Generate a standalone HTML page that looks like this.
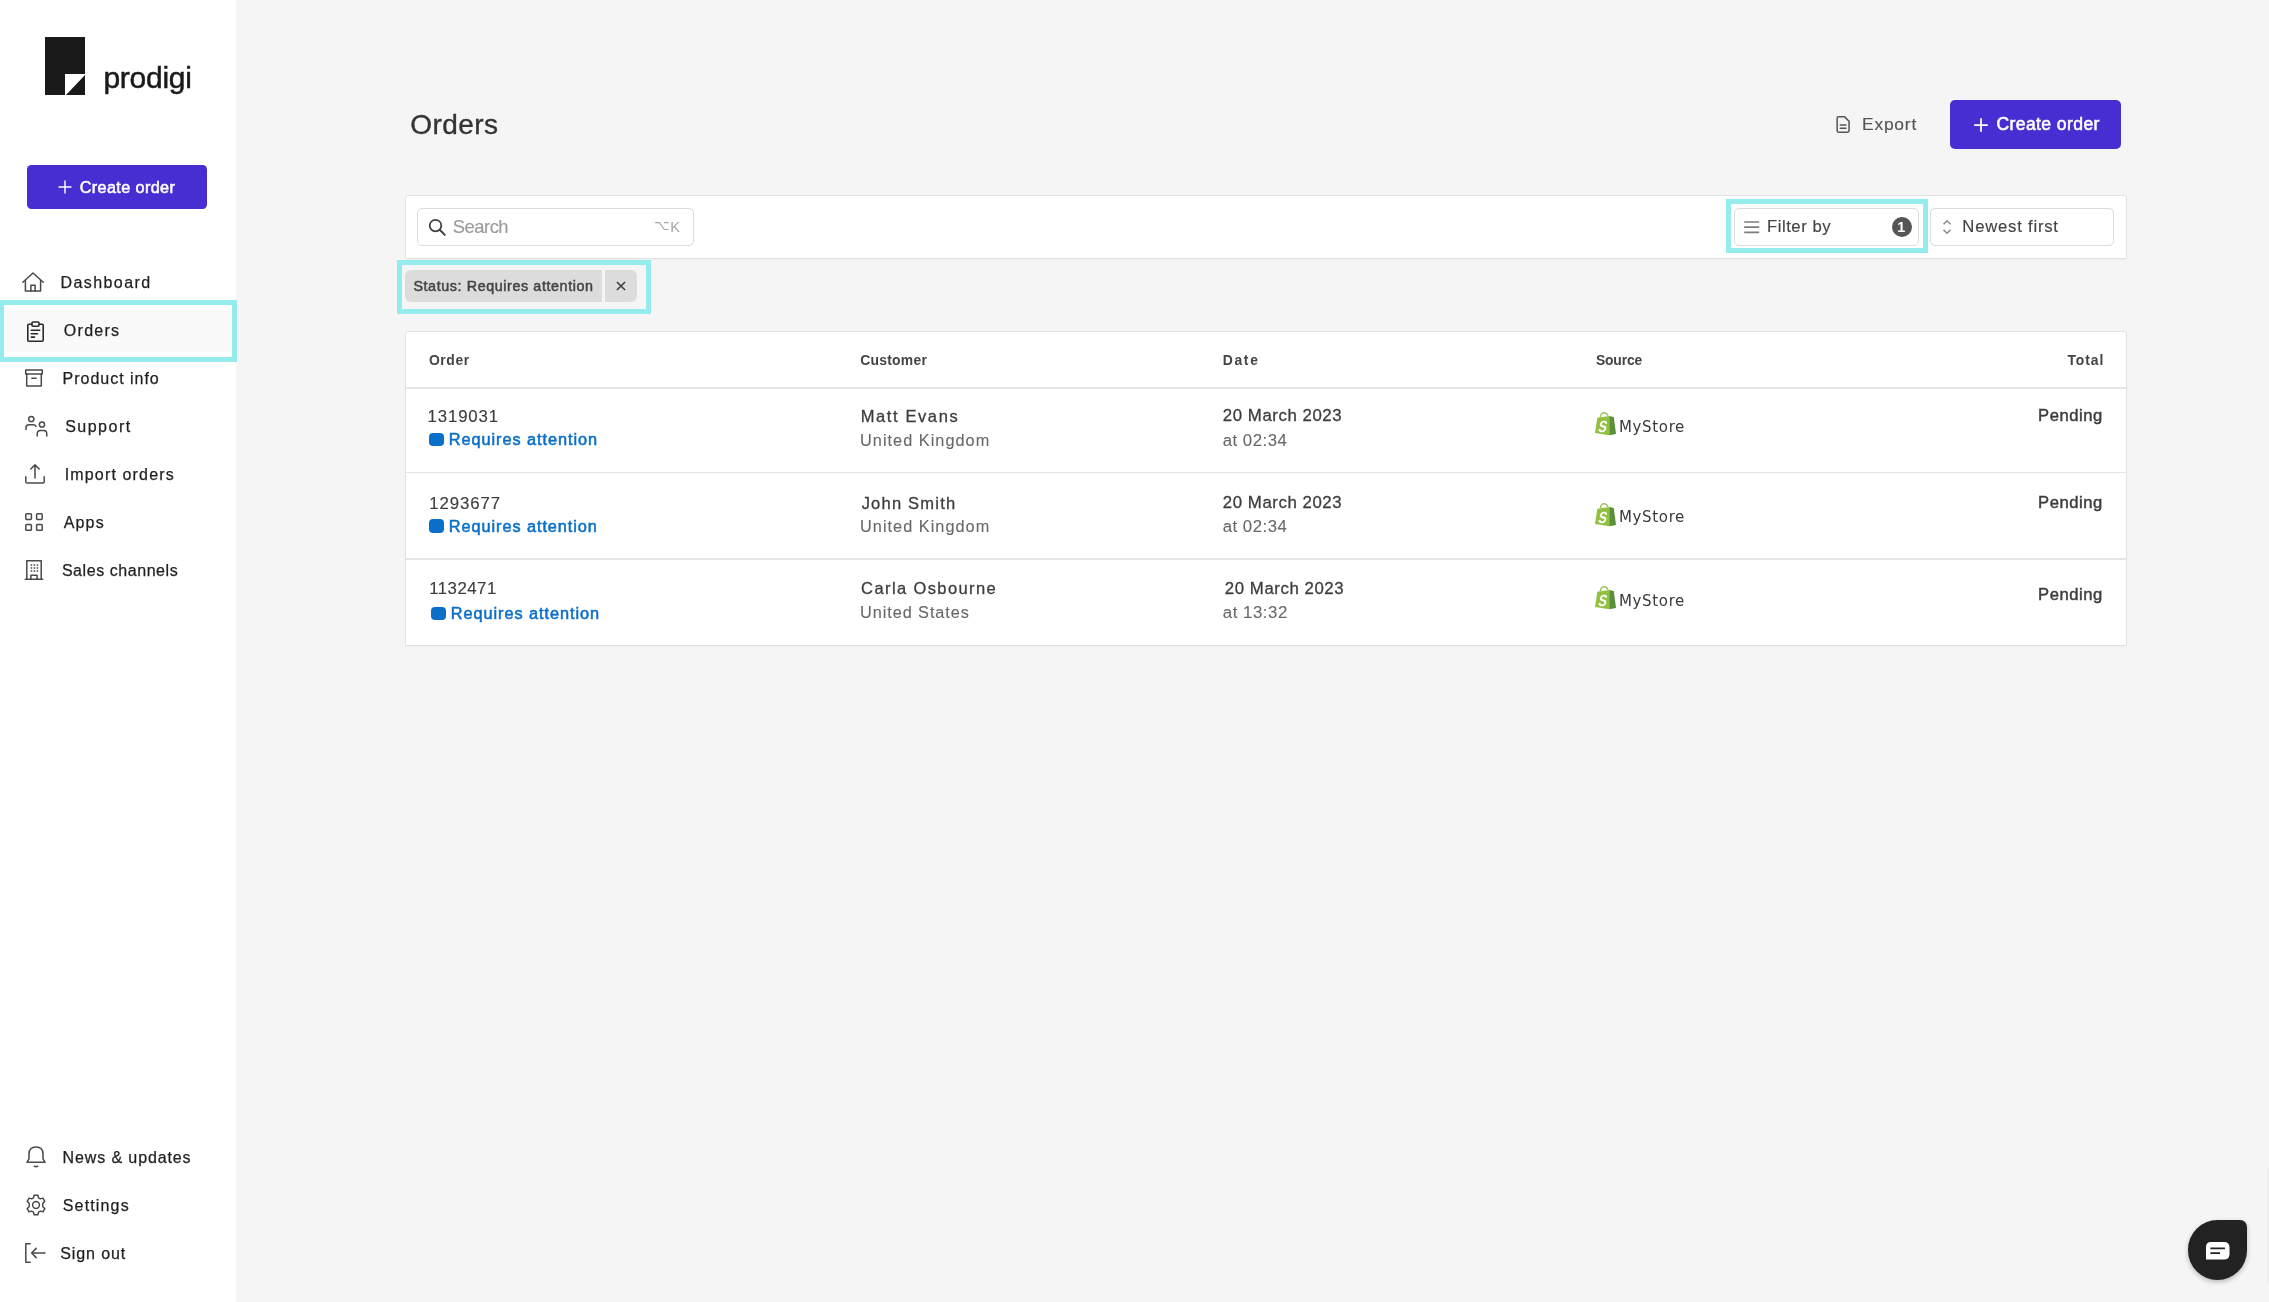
<!DOCTYPE html>
<html lang="en"><head><meta charset="utf-8"><title>Orders - Prodigi</title>
<style>
html,body{margin:0;padding:0;}
body{width:2269px;height:1302px;position:relative;background:#f5f5f5;font-family:'Liberation Sans',sans-serif;}
.t{position:absolute;white-space:pre;line-height:1;font-family:'Liberation Sans',sans-serif;}
.abs{position:absolute;box-sizing:border-box;}
#sidebar{left:0;top:0;width:236px;height:1302px;background:#fff;}
.btn{background:#462ed3;border-radius:3px;}
.panel{background:#fff;border:1px solid #e2e2e2;border-radius:2px;box-shadow:0 1px 1.5px rgba(0,0,0,0.03);}
.field{background:#fff;border:1px solid #dcdcdc;border-radius:5px;}
.hl{border:5px solid #95ecec;}
.sep{background:#e5e5e5;height:1px;}
svg{position:absolute;overflow:visible;}
.ic{fill:none;stroke:#4a4a4a;stroke-width:1.5;stroke-linecap:round;stroke-linejoin:round;}
#app{position:absolute;left:0;top:0;width:2269px;height:1302px;overflow:hidden;will-change:transform;}

</style></head>
<body>
<div id="app">
<div id="sidebar" class="abs"></div>
<!-- logo -->
<svg style="left:45px;top:37px" width="40" height="58" viewBox="0 0 40 58"><path d="M0 0H40V37H20V58H0Z" fill="#1a1a1a"/><path d="M40 38V58H21Z" fill="#1a1a1a"/></svg>
<!-- sidebar create button -->
<div class="abs btn" style="left:27px;top:165px;width:180px;height:44px;border-radius:4.5px;"></div>
<svg style="left:58px;top:180px" width="14" height="14" viewBox="0 0 14 14"><path d="M7 0.5V13.5M0.5 7H13.5" stroke="#fff" stroke-width="1.45" fill="none"/></svg>
<!-- active nav item -->
<div class="abs" style="left:0;top:309.5px;width:236px;height:42px;background:#f9f9f9;"></div>
<div class="abs hl" style="left:-1.3px;top:300px;width:238.3px;height:62px;"></div>

<!-- NAV ICONS -->
<!-- home -->
<svg class="ic" style="left:22px;top:272px" width="22" height="20" viewBox="0 0 22 20"><path d="M0.8 10.2L11 1L21.2 10.2"/><path d="M3.4 8.5V19H18.6V8.5"/><path d="M8.9 19V13.3H13.1V19"/></svg>
<!-- orders clipboard -->
<svg class="ic" style="left:27.1px;top:320.7px;stroke:#2a2a2a;stroke-width:1.6" width="17" height="21" viewBox="0 0 17 21"><path d="M4.5 3.2H1.8Q0.8 3.2 0.8 4.2V19.2Q0.8 20.2 1.8 20.2H15.2Q16.2 20.2 16.2 19.2V4.2Q16.2 3.2 15.2 3.2H12.5"/><rect x="5" y="1" width="7" height="4.2" rx="1"/><path d="M4.3 9.3H12.7M4.3 12.7H10.5M4.3 16.1H7.5"/></svg>
<!-- product info box -->
<svg class="ic" style="left:25px;top:369px" width="18" height="18" viewBox="0 0 18 18"><rect x="0.7" y="0.9" width="16.6" height="4.2"/><path d="M1.7 5.1V17.1H16.3V5.1"/><path d="M6.8 9.2H11.2"/></svg>
<!-- support people -->
<svg class="ic" style="left:25px;top:415px" width="24" height="22" viewBox="0 0 24 22"><circle cx="6.3" cy="4" r="2.6"/><path d="M1 14.5V12.8Q1 9.8 4 9.8H8.2Q10.4 9.8 11 11.5"/><circle cx="17" cy="9.5" r="2.6"/><path d="M12.2 21V19.2Q12.2 15.6 15.4 15.6H18.6Q21.8 15.6 21.8 19.2V21"/></svg>
<!-- import upload -->
<svg class="ic" style="left:25px;top:464px" width="20" height="20" viewBox="0 0 20 20"><path d="M10 14V1M5.8 5L10 0.9L14.2 5"/><path d="M0.8 12.8V17.7Q0.8 19 2.1 19H17.9Q19.2 19 19.2 17.7V12.8"/></svg>
<!-- apps grid -->
<svg class="ic" style="left:25px;top:513px" width="18" height="18" viewBox="0 0 18 18"><rect x="0.8" y="0.8" width="5.6" height="5.6" rx="0.8"/><rect x="11.6" y="0.8" width="5.6" height="5.6" rx="0.8"/><rect x="0.8" y="11.6" width="5.6" height="5.6" rx="0.8"/><rect x="11.6" y="11.6" width="5.6" height="5.6" rx="0.8"/></svg>
<!-- sales channels building -->
<svg class="ic" style="left:25px;top:560px" width="18" height="20" viewBox="0 0 18 20"><path d="M0.3 19.2H17.7"/><path d="M1.8 19V0.8H16.2V19"/><path d="M5.9 19V15.2H12.1V19"/><path d="M5.6 5H7.2M8.6 5H10.2M11.6 5H13.2M5.6 8H7.2M8.6 8H10.2M11.6 8H13.2M5.6 11H7.2M8.6 11H10.2M11.6 11H13.2" stroke-linecap="butt" stroke-width="1.5"/></svg>
<!-- bell -->
<svg class="ic" style="left:26px;top:1146px" width="20" height="22" viewBox="0 0 20 22"><path d="M1 16.2H19L17 12.8V8Q17 1 10 1Q3 1 3 8V12.8Z"/><path d="M8.2 20.2Q10 21.4 11.8 20.2"/></svg>
<!-- settings gear -->
<svg class="ic" style="left:25px;top:1194px" width="22" height="22" viewBox="0 0 22 22"><circle cx="11" cy="11" r="3.4"/><path d="M9.1 1.2H12.9L13.5 3.9L15.3 4.9L17.9 4.1L19.8 7.4L17.8 9.2V11V12.8L19.8 14.6L17.9 17.9L15.3 17.1L13.5 18.1L12.9 20.8H9.1L8.5 18.1L6.7 17.1L4.1 17.9L2.2 14.6L4.2 12.8V9.2L2.2 7.4L4.1 4.1L6.7 4.9L8.5 3.9Z"/></svg>
<!-- sign out -->
<svg class="ic" style="left:25px;top:1243px" width="21" height="20" viewBox="0 0 21 20"><path d="M5.2 0.8H0.8V19.2H5.2"/><path d="M20 10H6.8M11.2 5.4L6.6 10L11.2 14.6"/></svg>

<!-- HEADER -->
<svg class="ic" style="left:1836.4px;top:116.4px;stroke:#555;stroke-width:1.6" width="14.6" height="17" viewBox="0 0 15 18"><path d="M9 0.9H2.4Q1 0.9 1 2.3V15.7Q1 17.1 2.4 17.1H12.2Q13.6 17.1 13.6 15.7V5.5Z"/><path d="M4.3 9.6H10.3M4.3 12.9H10.3"/></svg>
<div class="abs btn" style="left:1950px;top:99.8px;width:171.2px;height:49.4px;border-radius:5px;"></div>
<svg style="left:1973.6px;top:117.9px" width="14" height="14" viewBox="0 0 14 14"><path d="M7 0.2V13.8M0.2 7H13.8" stroke="#fff" stroke-width="1.75" fill="none"/></svg>

<!-- TOOLBAR -->
<div class="abs panel" style="left:405px;top:195px;width:1722px;height:64px;"></div>
<div class="abs field" style="left:417px;top:208px;width:276.6px;height:37.7px;"></div>
<svg style="left:428.3px;top:218px" width="18" height="18" viewBox="0 0 18 18"><circle cx="7.5" cy="7.6" r="5.8" fill="none" stroke="#3c3c3c" stroke-width="1.75"/><path d="M11.9 12L16.8 16.9" stroke="#3c3c3c" stroke-width="1.9" stroke-linecap="round"/></svg>
<span class="t" style="left:654px;top:219px;font-size:13.4px;color:#a6a6a6;font-family:'DejaVu Sans','Liberation Sans',sans-serif;">⌥</span><span class="t" style="left:670.3px;top:219.5px;font-size:14.5px;color:#a6a6a6;">K</span>

<div class="abs hl" style="left:1726px;top:199px;width:202px;height:54px;"></div>
<div class="abs field" style="left:1734.2px;top:208px;width:184.6px;height:37.7px;"></div>
<svg style="left:1743.6px;top:220px" width="16" height="14" viewBox="0 0 16 14"><path d="M0.2 2H15.2M0.2 7.2H15.2M0.2 12.3H15.2" stroke="#7d7d7d" stroke-width="1.7" fill="none"/></svg>
<div class="abs" style="left:1892px;top:216.8px;width:19.8px;height:19.8px;border-radius:50%;background:#555;"></div>
<span class="t" style="left:1891.2px;top:220px;width:20px;text-align:center;font-size:14.3px;font-weight:700;color:#fff;">1</span>
<div class="abs field" style="left:1930.2px;top:208px;width:183.6px;height:37.7px;"></div>
<svg style="left:1942.1px;top:219px" width="10" height="16" viewBox="0 0 10 16"><path d="M1.5 5.3L5 1.9L8.5 5.3M1.5 10.9L5 14.3L8.5 10.9" stroke="#8e8e8e" stroke-width="1.5" fill="none" stroke-linecap="butt" stroke-linejoin="miter"/></svg>

<!-- CHIP -->
<div class="abs hl" style="left:397px;top:260px;width:254px;height:54px;"></div>
<div class="abs" style="left:404.6px;top:270px;width:197.6px;height:32.2px;background:#dcdcdc;border-radius:6px 0 0 6px;"></div>
<div class="abs" style="left:604.9px;top:270px;width:32.1px;height:32.2px;background:#dcdcdc;border-radius:0 6px 6px 0;"></div>
<svg style="left:615.9px;top:281.2px" width="10" height="10" viewBox="0 0 10 10"><path d="M0.9 0.9L9.1 9.1M9.1 0.9L0.9 9.1" stroke="#3a3a3a" stroke-width="1.45" fill="none"/></svg>

<!-- TABLE -->
<div class="abs panel" style="left:405px;top:331px;width:1722px;height:315px;"></div>
<div class="abs sep" style="left:406px;top:387.4px;width:1720px;height:1.4px;"></div>
<div class="abs sep" style="left:406px;top:472px;width:1720px;height:1.3px;"></div>
<div class="abs sep" style="left:406px;top:558.3px;width:1720px;height:1.4px;"></div>

<!-- status squares -->
<div class="abs" style="left:428.8px;top:433px;width:15px;height:13.4px;background:#0b6fc9;border-radius:4px;"></div>
<div class="abs" style="left:428.8px;top:519.3px;width:15px;height:13.6px;background:#0b6fc9;border-radius:4px;"></div>
<div class="abs" style="left:431px;top:606.6px;width:15px;height:13.5px;background:#0b6fc9;border-radius:4px;"></div>

<!-- shopify bags -->
<svg style="left:1594px;top:411px" width="23" height="26" viewBox="0 0 23 26"><path d="M6.2 6.4Q6.9 1.9 9.9 1.6Q12.6 1.7 14.2 4.8" fill="none" stroke="#95bf47" stroke-width="1.3"/><path d="M3.3 6.8L15.4 4.9V24.2L1 22Z" fill="#92c140"/><path d="M15.3 4.9L19.8 5.9L22 22.9L15.3 24.2Z" fill="#5a8f3c"/><text transform="translate(3.6 20.9) skewX(-12) scale(0.8 1)" x="0" y="0" font-family="Liberation Sans, sans-serif" font-size="16" font-weight="700" fill="#ffffff">S</text></svg>
<svg style="left:1594px;top:502.1px" width="23" height="26" viewBox="0 0 23 26"><path d="M6.2 6.4Q6.9 1.9 9.9 1.6Q12.6 1.7 14.2 4.8" fill="none" stroke="#95bf47" stroke-width="1.3"/><path d="M3.3 6.8L15.4 4.9V24.2L1 22Z" fill="#92c140"/><path d="M15.3 4.9L19.8 5.9L22 22.9L15.3 24.2Z" fill="#5a8f3c"/><text transform="translate(3.6 20.9) skewX(-12) scale(0.8 1)" x="0" y="0" font-family="Liberation Sans, sans-serif" font-size="16" font-weight="700" fill="#ffffff">S</text></svg>
<svg style="left:1594px;top:585px" width="23" height="26" viewBox="0 0 23 26"><path d="M6.2 6.4Q6.9 1.9 9.9 1.6Q12.6 1.7 14.2 4.8" fill="none" stroke="#95bf47" stroke-width="1.3"/><path d="M3.3 6.8L15.4 4.9V24.2L1 22Z" fill="#92c140"/><path d="M15.3 4.9L19.8 5.9L22 22.9L15.3 24.2Z" fill="#5a8f3c"/><text transform="translate(3.6 20.9) skewX(-12) scale(0.8 1)" x="0" y="0" font-family="Liberation Sans, sans-serif" font-size="16" font-weight="700" fill="#ffffff">S</text></svg>

<!-- chat bubble -->
<div class="abs" style="left:2187.5px;top:1220px;width:59.6px;height:59.8px;background:#222;border-radius:30px 7px 30px 30px;box-shadow:0 2px 5px rgba(0,0,0,0.25);"></div>
<svg style="left:2205.8px;top:1241.9px" width="24" height="18" viewBox="0 0 24 18"><path d="M5 0H18Q23.5 0 23.5 5.5V12Q23.5 17.5 18 17.5H0V5Q0 0 5 0Z" fill="#fff"/><path d="M4.4 6.4H19M4.4 11.2H14" stroke="#222" stroke-width="1.7" fill="none"/></svg>
<!-- faint scrollbar edge -->
<div class="abs" style="left:2267px;top:1168px;width:1px;height:116px;background:#ececec;"></div>

<!-- text layer -->
<span class="t" style="left:103.39px;top:63px;font-size:30px;color:#1a1a1a;letter-spacing:-0.259px;-webkit-text-stroke:0.5px #1a1a1a;">prodigi</span>
<span class="t" style="left:79.76px;top:179px;font-size:16.2px;color:#ffffff;letter-spacing:0.382px;-webkit-text-stroke:0.55px #ffffff;">Create order</span>
<span class="t" style="left:60.62px;top:275px;font-size:16px;color:#1f1f1f;letter-spacing:1.400px;-webkit-text-stroke:0.25px #1f1f1f;">Dashboard</span>
<span class="t" style="left:63.82px;top:323px;font-size:16px;color:#1f1f1f;letter-spacing:1.276px;-webkit-text-stroke:0.25px #1f1f1f;">Orders</span>
<span class="t" style="left:62.57px;top:371px;font-size:16px;color:#1f1f1f;letter-spacing:0.982px;-webkit-text-stroke:0.25px #1f1f1f;">Product info</span>
<span class="t" style="left:65.16px;top:419px;font-size:16px;color:#1f1f1f;letter-spacing:1.494px;-webkit-text-stroke:0.25px #1f1f1f;">Support</span>
<span class="t" style="left:64.77px;top:467px;font-size:16px;color:#1f1f1f;letter-spacing:1.145px;-webkit-text-stroke:0.25px #1f1f1f;">Import orders</span>
<span class="t" style="left:63.63px;top:515px;font-size:16px;color:#1f1f1f;letter-spacing:1.191px;-webkit-text-stroke:0.25px #1f1f1f;">Apps</span>
<span class="t" style="left:61.89px;top:563px;font-size:16px;color:#1f1f1f;letter-spacing:0.559px;-webkit-text-stroke:0.25px #1f1f1f;">Sales channels</span>
<span class="t" style="left:62.60px;top:1150px;font-size:16px;color:#1f1f1f;letter-spacing:0.885px;-webkit-text-stroke:0.25px #1f1f1f;">News &amp; updates</span>
<span class="t" style="left:62.80px;top:1198px;font-size:16px;color:#1f1f1f;letter-spacing:1.149px;-webkit-text-stroke:0.25px #1f1f1f;">Settings</span>
<span class="t" style="left:60.30px;top:1246px;font-size:16px;color:#1f1f1f;letter-spacing:0.888px;-webkit-text-stroke:0.25px #1f1f1f;">Sign out</span>
<span class="t" style="left:410.21px;top:111px;font-size:28px;color:#333;letter-spacing:0.431px;-webkit-text-stroke:0.35px #333;">Orders</span>
<span class="t" style="left:1862.00px;top:116px;font-size:17.4px;color:#555;letter-spacing:0.798px;-webkit-text-stroke:0.15px #555;">Export</span>
<span class="t" style="left:1996.42px;top:116px;font-size:17.6px;color:#fff;letter-spacing:0.389px;-webkit-text-stroke:0.55px #fff;">Create order</span>
<span class="t" style="left:452.87px;top:218px;font-size:18.4px;color:#9a9a9a;letter-spacing:-0.520px;-webkit-text-stroke:0.15px #9a9a9a;">Search</span>
<span class="t" style="left:1767.00px;top:219px;font-size:16.7px;color:#444;letter-spacing:0.532px;-webkit-text-stroke:0.15px #444;">Filter by</span>
<span class="t" style="left:1962.35px;top:219px;font-size:16.7px;color:#444;letter-spacing:0.773px;-webkit-text-stroke:0.15px #444;">Newest first</span>
<span class="t" style="left:413.41px;top:279px;font-size:14.3px;color:#444;letter-spacing:0.604px;-webkit-text-stroke:0.5px #444;">Status: Requires attention</span>
<span class="t" style="left:428.92px;top:354px;font-size:13.9px;font-weight:700;color:#444;letter-spacing:0.612px;">Order</span>
<span class="t" style="left:860.13px;top:354px;font-size:13.9px;font-weight:700;color:#444;letter-spacing:0.275px;">Customer</span>
<span class="t" style="left:1222.63px;top:354px;font-size:13.9px;font-weight:700;color:#444;letter-spacing:1.734px;">Date</span>
<span class="t" style="left:1595.90px;top:354px;font-size:13.9px;font-weight:700;color:#444;letter-spacing:-0.140px;">Source</span>
<span class="t" style="left:2067.40px;top:354px;font-size:13.9px;font-weight:700;color:#444;letter-spacing:0.926px;">Total</span>
<span class="t" style="left:427.62px;top:409px;font-size:16.8px;color:#3d3d3d;letter-spacing:0.849px;-webkit-text-stroke:0.15px #3d3d3d;">1319031</span>
<span class="t" style="left:448.75px;top:431px;font-size:16.3px;color:#0b6fc9;letter-spacing:0.949px;-webkit-text-stroke:0.55px #0b6fc9;">Requires attention</span>
<span class="t" style="left:860.70px;top:408px;font-size:16.5px;color:#3d3d3d;letter-spacing:1.604px;-webkit-text-stroke:0.3px #3d3d3d;">Matt Evans</span>
<span class="t" style="left:860.00px;top:432px;font-size:16.3px;color:#686868;letter-spacing:1.033px;-webkit-text-stroke:0.1px #686868;">United Kingdom</span>
<span class="t" style="left:1222.81px;top:408px;font-size:16.8px;color:#3d3d3d;letter-spacing:0.569px;-webkit-text-stroke:0.3px #3d3d3d;">20 March 2023</span>
<span class="t" style="left:1222.75px;top:433px;font-size:16.8px;color:#686868;letter-spacing:0.484px;-webkit-text-stroke:0.1px #686868;">at 02:34</span>
<span class="t" style="left:1618.97px;top:420px;font-size:15px;color:#3a3a3a;letter-spacing:0.652px;font-family:'DejaVu Sans', sans-serif;">MyStore</span>
<span class="t" style="left:2038.00px;top:408px;font-size:16.6px;color:#3d3d3d;letter-spacing:0.575px;-webkit-text-stroke:0.45px #3d3d3d;">Pending</span>
<span class="t" style="left:429.16px;top:496px;font-size:16.8px;color:#3d3d3d;letter-spacing:0.931px;-webkit-text-stroke:0.15px #3d3d3d;">1293677</span>
<span class="t" style="left:448.79px;top:518px;font-size:16.3px;color:#0b6fc9;letter-spacing:0.941px;-webkit-text-stroke:0.55px #0b6fc9;">Requires attention</span>
<span class="t" style="left:861.64px;top:495px;font-size:16.5px;color:#3d3d3d;letter-spacing:1.226px;-webkit-text-stroke:0.3px #3d3d3d;">John Smith</span>
<span class="t" style="left:860.00px;top:518px;font-size:16.3px;color:#686868;letter-spacing:1.033px;-webkit-text-stroke:0.1px #686868;">United Kingdom</span>
<span class="t" style="left:1222.81px;top:495px;font-size:16.8px;color:#3d3d3d;letter-spacing:0.569px;-webkit-text-stroke:0.3px #3d3d3d;">20 March 2023</span>
<span class="t" style="left:1222.75px;top:519px;font-size:16.8px;color:#686868;letter-spacing:0.484px;-webkit-text-stroke:0.1px #686868;">at 02:34</span>
<span class="t" style="left:1618.97px;top:510px;font-size:15px;color:#3a3a3a;letter-spacing:0.652px;font-family:'DejaVu Sans', sans-serif;">MyStore</span>
<span class="t" style="left:2038.00px;top:495px;font-size:16.6px;color:#3d3d3d;letter-spacing:0.575px;-webkit-text-stroke:0.45px #3d3d3d;">Pending</span>
<span class="t" style="left:429.16px;top:581px;font-size:16.8px;color:#3d3d3d;letter-spacing:0.504px;-webkit-text-stroke:0.15px #3d3d3d;">1132471</span>
<span class="t" style="left:450.75px;top:605px;font-size:16.3px;color:#0b6fc9;letter-spacing:0.949px;-webkit-text-stroke:0.55px #0b6fc9;">Requires attention</span>
<span class="t" style="left:861.11px;top:580px;font-size:16.5px;color:#3d3d3d;letter-spacing:1.394px;-webkit-text-stroke:0.3px #3d3d3d;">Carla Osbourne</span>
<span class="t" style="left:860.00px;top:604px;font-size:16.3px;color:#686868;letter-spacing:0.931px;-webkit-text-stroke:0.1px #686868;">United States</span>
<span class="t" style="left:1224.81px;top:581px;font-size:16.8px;color:#3d3d3d;letter-spacing:0.569px;-webkit-text-stroke:0.3px #3d3d3d;">20 March 2023</span>
<span class="t" style="left:1222.75px;top:605px;font-size:16.8px;color:#686868;letter-spacing:0.553px;-webkit-text-stroke:0.1px #686868;">at 13:32</span>
<span class="t" style="left:1618.97px;top:594px;font-size:15px;color:#3a3a3a;letter-spacing:0.652px;font-family:'DejaVu Sans', sans-serif;">MyStore</span>
<span class="t" style="left:2038.00px;top:587px;font-size:16.6px;color:#3d3d3d;letter-spacing:0.575px;-webkit-text-stroke:0.45px #3d3d3d;">Pending</span>
</div>
</body></html>
